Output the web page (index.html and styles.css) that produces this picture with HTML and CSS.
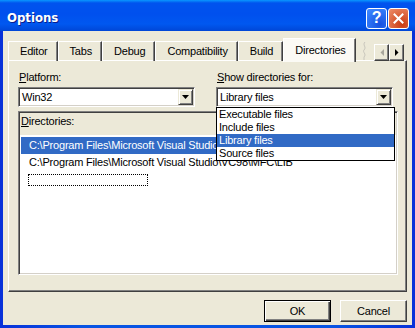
FILE: index.html
```html
<!DOCTYPE html>
<html lang="en">
<head>
	<meta charset="UTF-8">
	<meta name="viewport" content="width=device-width, initial-scale=1.0">
	<link rel="stylesheet" href="styles.css">
	<title>Options</title>
</head>
<body>
	<div class="window">
		<div class="titlebar">
			<span class="title">Options</span>
			<div class="caption">
				<button class="cap-btn help">?</button>
				<button class="cap-btn close" aria-label="Close">
					<svg width="11" height="11" viewBox="0 0 11 11"><path d="M1.5 1.5 L9.5 9.5 M9.5 1.5 L1.5 9.5" stroke="#fff" stroke-width="2" stroke-linecap="square"/></svg>
				</button>
			</div>
		</div>
		<div class="client">
			<div class="tabstrip">
				<div class="tab">Editor</div>
				<div class="tab">Tabs</div>
				<div class="tab">Debug</div>
				<div class="tab">Compatibility</div>
				<div class="tab">Build</div>
				<div class="tab selected">Directories</div>
				<svg class="tab-cut" width="8" height="18" viewBox="0 0 8 18"><path d="M4 0 C1 3 6 5 3 8 C1 10 6 12 3 15 L3 18" fill="none" stroke="#c8c6bc" stroke-width="1"/></svg>
				<div class="tab-scroll">
					<button class="spin" disabled><svg width="4" height="7" viewBox="0 0 4 7"><path d="M4 0 L4 7 L0.5 3.5 Z" fill="#a8a69c"/></svg></button>
					<button class="spin"><svg width="4" height="7" viewBox="0 0 4 7"><path d="M0 0 L0 7 L3.5 3.5 Z" fill="#000"/></svg></button>
				</div>
			</div>
			<div class="panel">
				<div class="fields">
					<div class="field">
						<label><u>P</u>latform:</label>
						<div class="combo">
							<span>Win32</span>
							<span class="combo-btn"><svg width="7" height="4" viewBox="0 0 7 4"><path d="M0 0 H7 L3.5 4 Z" fill="#000"/></svg></span>
						</div>
					</div>
					<div class="field">
						<label><u>S</u>how directories for:</label>
						<div class="combo">
							<span>Library files</span>
							<span class="combo-btn"><svg width="7" height="4" viewBox="0 0 7 4"><path d="M0 0 H7 L3.5 4 Z" fill="#000"/></svg></span>
							<ul class="dropdown">
								<li>Executable files</li>
								<li>Include files</li>
								<li class="selected">Library files</li>
								<li>Source files</li>
							</ul>
						</div>
					</div>
				</div>
				<div class="dirs">
					<div class="dirs-head"><u>D</u>irectories:</div>
					<ul class="dir-list">
						<li class="selected">C:\Program Files\Microsoft Visual Studio\VC98\LIB</li>
						<li>C:\Program Files\Microsoft Visual Studio\VC98\MFC\LIB</li>
						<li><span class="new-entry"></span></li>
					</ul>
				</div>
			</div>
			<div class="actions">
				<button class="btn default">OK</button>
				<button class="btn">Cancel</button>
			</div>
		</div>
	</div>
</body>
</html>
```

FILE: styles.css
```css
* {
	box-sizing: border-box;
}

:root {
	--face: #ece9d8;
	--shadow: #808080;
	--dark: #404040;
	--light: #fff;
	--select: #316ac5;
}

body {
	margin: 0;
	background: #fff;
	color: #000;
	font: 11px/13px "Liberation Sans", Arial, sans-serif;
	letter-spacing: -0.2px;
}

ul {
	margin: 0;
	padding: 0;
	list-style: none;
}

button {
	font: inherit;
	letter-spacing: inherit;
	color: inherit;
	padding: 0;
}

.window {
	width: 415px;
	height: 328px;
	display: flex;
	flex-direction: column;
	background: linear-gradient(to right, #0831d9, #0854e3 20%, #0854e3 80%, #0831d9);
}

/* title bar */
.titlebar {
	height: 31px;
	flex-shrink: 0;
	display: flex;
	align-items: center;
	justify-content: space-between;
	padding: 5px 6px 0 7px;
	background: linear-gradient(#0997ff 0, #0053ee 3px, #0050ee 14px, #0058f0 24px, #0046d6 31px);
}
.title {
	color: #fff;
	font: bold 13px/16px "DejaVu Sans Condensed", "Liberation Sans", sans-serif;
	letter-spacing: 0;
	text-shadow: 1px 1px #0a1e8c;
}
.caption {
	display: flex;
	gap: 1px;
}
.cap-btn {
	width: 21px;
	height: 21px;
	border: 1px solid #fff;
	border-radius: 3px;
	display: flex;
	align-items: center;
	justify-content: center;
	color: #fff;
}
.help {
	background: radial-gradient(circle at 70% 80%, #1550e0, #3c86ff 90%);
	font: bold 16px "Liberation Sans", sans-serif;
}
.close {
	background: radial-gradient(circle at 70% 80%, #c93a12, #ec8a66 95%);
}

/* client area */
.client {
	flex: 1;
	display: flex;
	flex-direction: column;
	margin: 0 3px 3px;
	padding: 8px 5px 3px;
	background: var(--face);
}

.tabstrip {
	position: relative;
	z-index: 1;
	display: flex;
	align-items: flex-end;
	height: 22px;
	margin-bottom: -1px;
}
.tab {
	height: 20px;
	padding: 3px 9px 0 11px;
	border-top: 1px solid var(--light);
	border-left: 1px solid var(--light);
	border-right: 1px solid var(--dark);
	box-shadow: inset -1px 0 var(--shadow);
	white-space: nowrap;
}
.tab.selected {
	height: 24px;
	padding-top: 5px;
	background: #fbfaf5;
	margin-bottom: -1px;
}
.tab-cut {
	align-self: center;
	margin: 2px 0 0 5px;
}
.tab-scroll {
	align-self: flex-start;
	display: flex;
	margin: 5px 3px 0 auto;
}
.spin {
	width: 15px;
	height: 17px;
	display: flex;
	align-items: center;
	justify-content: center;
	background: var(--face);
	border: 1px solid;
	border-color: var(--light) var(--dark) var(--dark) var(--light);
	box-shadow: inset -1px -1px var(--shadow);
}

.panel {
	flex: 1;
	padding: 10px 8px 0 9px;
	border: 1px solid;
	border-color: var(--light) var(--dark) var(--dark) var(--light);
	box-shadow: inset -1px -1px var(--shadow);
}

.fields {
	display: grid;
	grid-template-columns: 177px 177px;
	column-gap: 21px;
}
.field label {
	display: block;
	padding-left: 1px;
}

.combo {
	position: relative;
	height: 20px;
	margin-top: 3px;
	display: flex;
	align-items: center;
	padding: 0 1px 0 3px;
	background: #fff;
	border: 1px solid;
	border-color: var(--shadow) var(--light) var(--light) var(--shadow);
	box-shadow: inset 1px 1px var(--dark), inset -1px -1px #d4d0c8;
}
.combo-btn {
	margin-left: auto;
	width: 15px;
	height: 16px;
	display: flex;
	align-items: center;
	justify-content: center;
	background: var(--face);
	border: 1px solid;
	border-color: var(--face) var(--dark) var(--dark) var(--face);
	box-shadow: inset 1px 1px var(--light), inset -1px -1px var(--shadow);
}

.dropdown {
	position: absolute;
	z-index: 5;
	left: -1px;
	top: 19px;
	width: 179px;
	background: #fff;
	border: 1px solid #000;
}
.dropdown li {
	height: 13px;
	padding-left: 2px;
}
.dropdown .selected {
	background: var(--select);
	color: #fff;
}

.dirs {
	height: 164px;
	width: 380px;
	margin-top: 4px;
	display: flex;
	flex-direction: column;
	padding: 1px;
	border: 1px solid;
	border-color: var(--shadow) var(--light) var(--light) var(--shadow);
	box-shadow: inset 1px 1px var(--dark), inset -1px -1px #d4d0c8;
}
.dirs-head {
	height: 22px;
	padding: 2px 0 0 1px;
}
.dir-list {
	flex: 1;
	background: #fff;
	padding: 2px 1px;
	overflow: hidden;
}
.dir-list li {
	height: 17px;
	line-height: 17px;
	padding-left: 8px;
	white-space: nowrap;
	overflow: hidden;
}
.dir-list .selected {
	background: var(--select);
	color: #fff;
}
.new-entry {
	display: inline-block;
	width: 120px;
	height: 12px;
	margin-left: -1px;
	vertical-align: middle;
	border: 1px dotted #000;
}

.actions {
	display: flex;
	justify-content: flex-end;
	gap: 9px;
	margin-top: 8px;
}
.btn {
	width: 67px;
	height: 22px;
	background: var(--face);
	border: 1px solid;
	border-color: var(--light) var(--dark) var(--dark) var(--light);
	box-shadow: inset -1px -1px var(--shadow);
}
.btn.default {
	border-color: #000;
	box-shadow: inset 1px 1px var(--light), inset -1px -1px var(--dark), inset -2px -2px var(--shadow);
}
```
